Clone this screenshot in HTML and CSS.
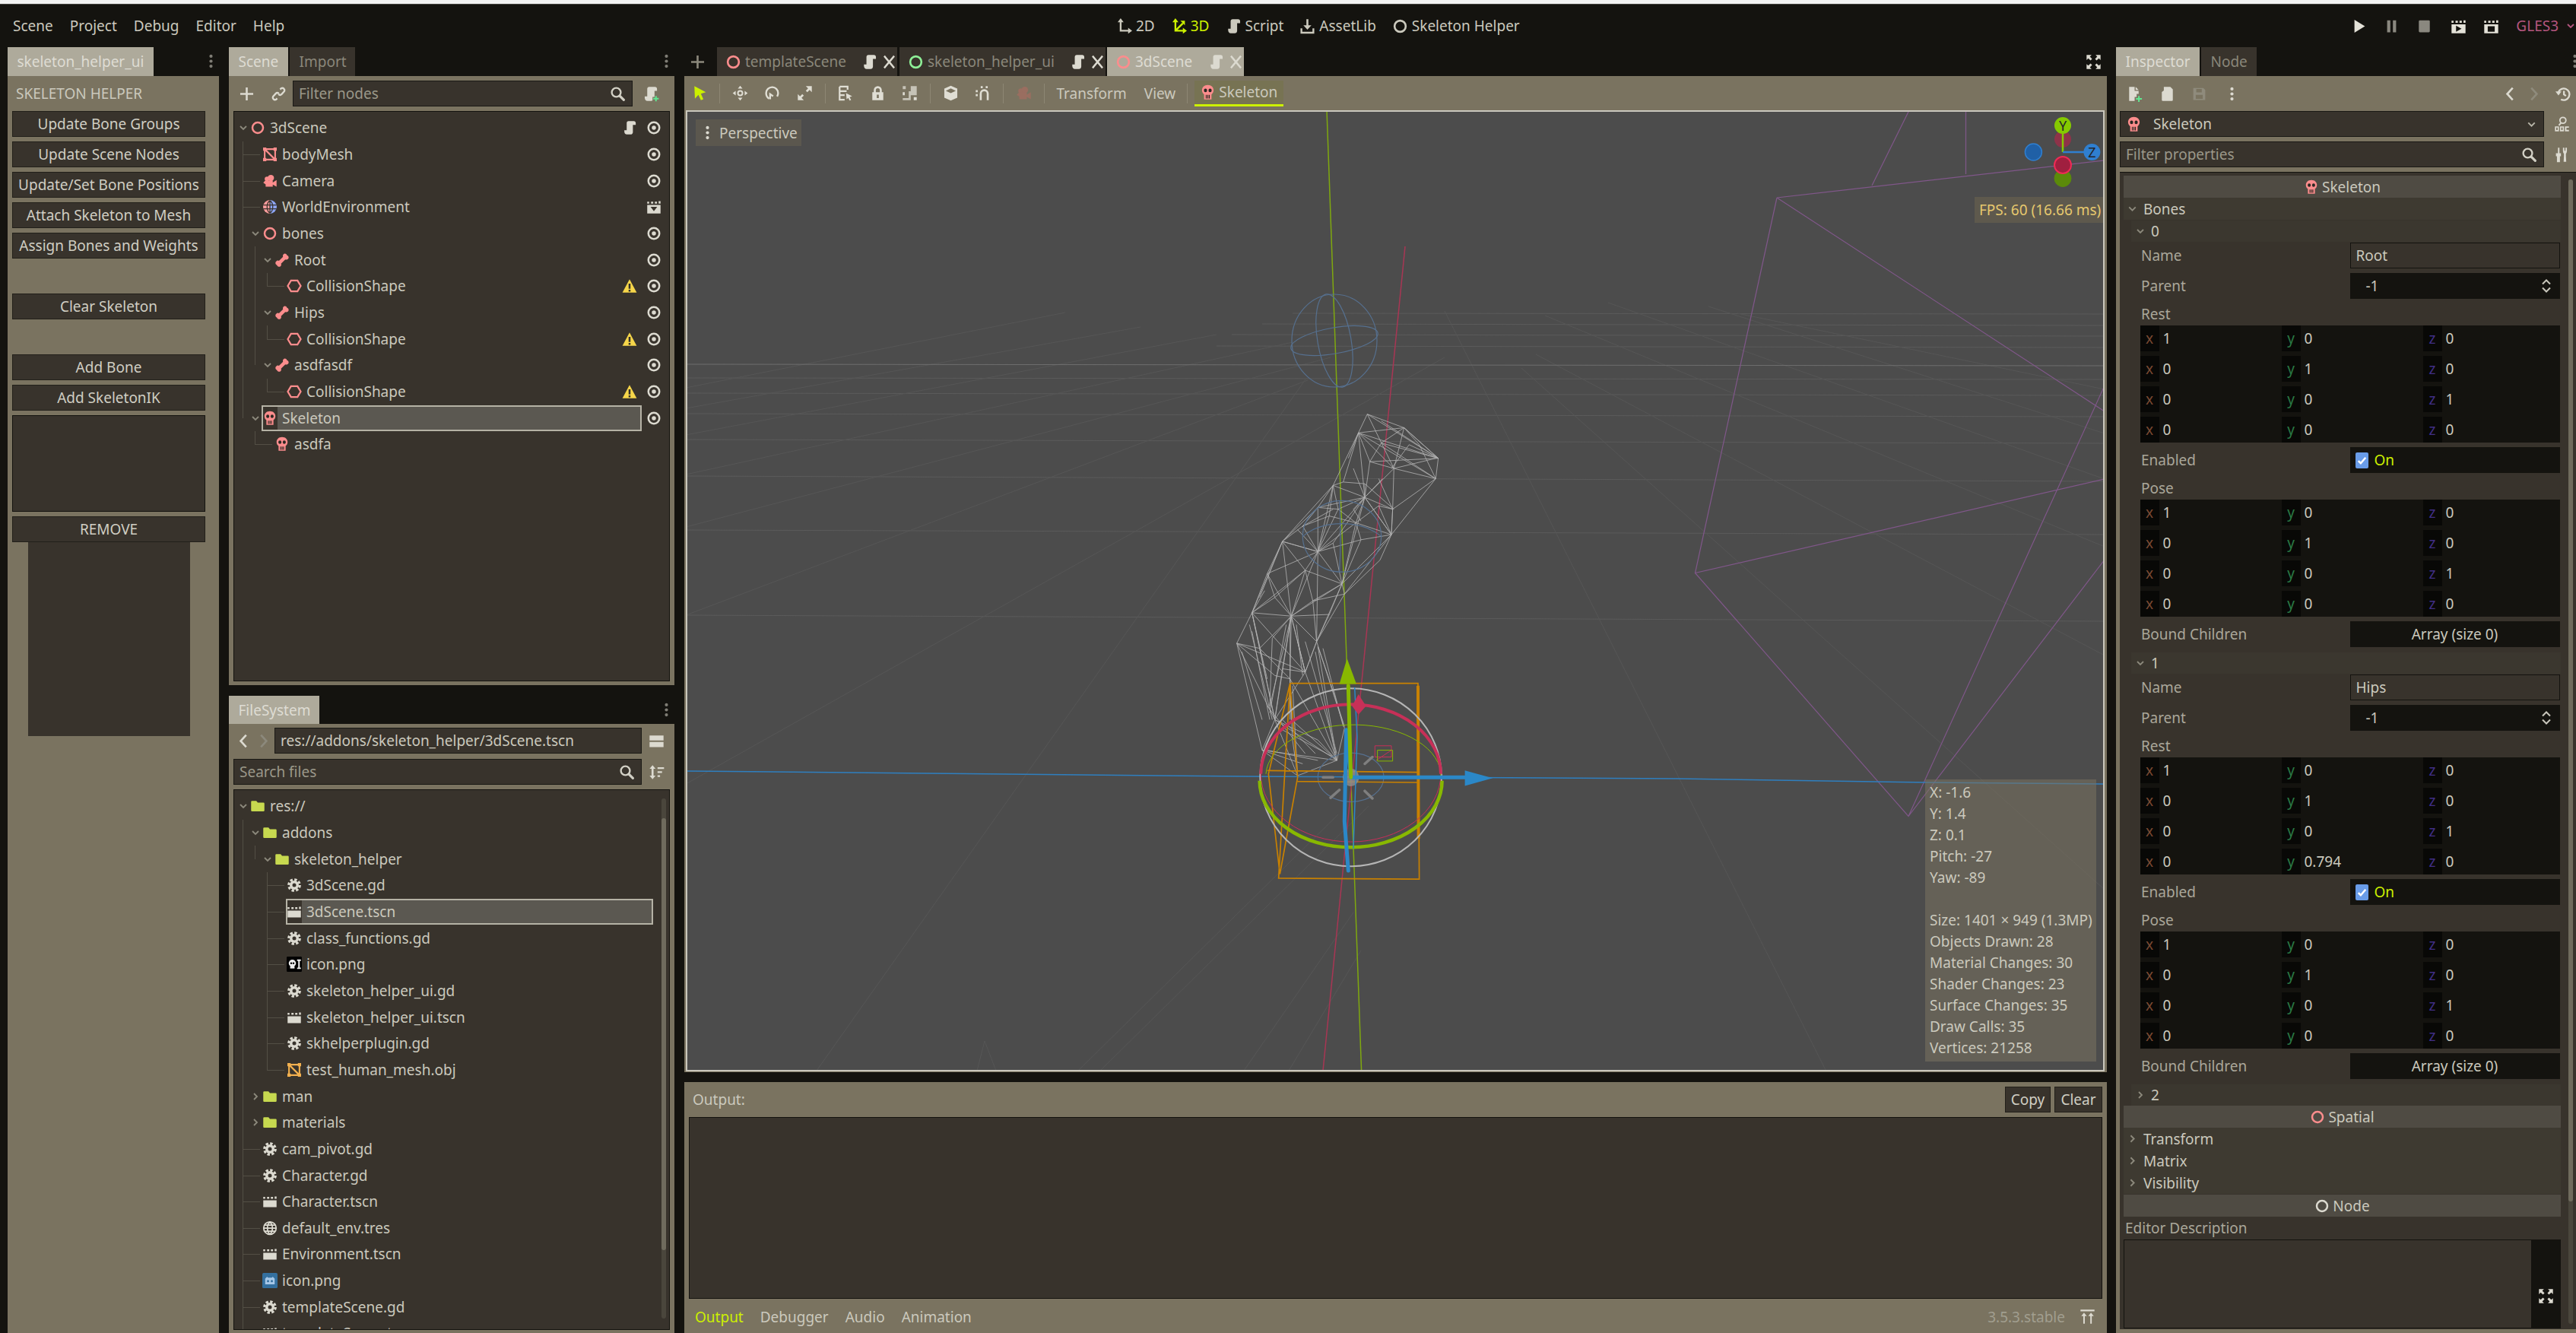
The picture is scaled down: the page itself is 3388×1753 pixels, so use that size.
FILE: index.html
```html
<!DOCTYPE html>
<html lang="en">
<head>
<meta charset="utf-8">
<title>Godot Engine - Skeleton Helper</title>
<link rel="stylesheet" href="styles.css">
</head>
<body>
<svg class="defs" width="0" height="0" aria-hidden="true">
<defs>
<symbol id="node" viewBox="0 0 16 16"><circle cx="8" cy="8" r="5.600" fill="none" stroke="currentColor" stroke-width="2"/></symbol>
<symbol id="eye" viewBox="0 0 16 16"><circle cx="8" cy="8" r="5.800" fill="none" stroke="currentColor" stroke-width="2"/><circle cx="8" cy="8" r="2.200" fill="currentColor"/></symbol>
<symbol id="script" viewBox="0 0 16 16"><path fill="currentColor" d="M7 1C5.700 1 5 2 5 3v7.500H2.500V12c0 1.800 1 3 2.700 3H9c1.500 0 2.500-1 2.500-2.500V5h3V3c0-1.200-.8-2-2-2z"/></symbol>
<symbol id="scriptadd" viewBox="0 0 16 16"><path fill="currentColor" d="M6 1C4.700 1 4 2 4 3v7.500H1.500V12c0 1.800 1 3 2.700 3H8c.6 0 1-.2 1.300-.5V11h2V5h2.500V3c0-1.200-.8-2-2-2z"/><path fill="#5fe890" d="M12 10h1.500v2H15.500v1.500h-2v2H12v-2h-2V12h2z"/></symbol>
<symbol id="warn" viewBox="0 0 16 16"><path fill="#f6d64a" d="M8 1l7.500 14H.5z"/><path fill="#33302a" d="M7 5.500h2V11H7zM7 12h2v2H7z"/></symbol>
<symbol id="mesh" viewBox="0 0 16 16"><path fill="none" stroke="currentColor" stroke-width="1.700" d="M2.500 2.500h11v11h-11zM2.500 2.500l11 11"/><path fill="currentColor" d="M.8.8h3.400v3.400H.8zM11.800.8h3.400v3.400h-3.400zM.8 11.800h3.400v3.400H.8zM11.800 11.800h3.400v3.400h-3.400z"/></symbol>
<symbol id="camera" viewBox="0 0 16 16"><circle cx="5" cy="5.800" r="2.500" fill="currentColor"/><circle cx="9" cy="4.800" r="3.300" fill="currentColor"/><path fill="currentColor" d="M1 9.800L3 7.500h8v2l4-2.500v7l-4-2.200v2.200H3.500V11.500z"/></symbol>
<symbol id="world" viewBox="0 0 16 16"><path fill="#fc9c9c" d="M8 .8a7.200 7.200 0 0 0 0 14.400z"/><path fill="#8da5f3" d="M8 .8a7.200 7.200 0 0 1 0 14.400z"/><path fill="none" stroke="#38332c" stroke-width="1" d="M1 6h14M1 10h14M8 1v14M8 1.500C4 4 4 12 8 14.500M8 1.500c4 2.500 4 10.500 0 13"/></symbol>
<symbol id="globe" viewBox="0 0 16 16"><g fill="none" stroke="currentColor" stroke-width="1.400"><circle cx="8" cy="8" r="6.600"/><path d="M1.500 8h13M8 1.500c-3.500 3-3.500 10 0 13M8 1.500c3.500 3 3.500 10 0 13M2.500 4.800h11M2.500 11.200h11"/></g></symbol>
<symbol id="bone" viewBox="0 0 16 16"><path fill="currentColor" d="M11.200 1.200a2.300 2.300 0 0 1 2 1.800 2.300 2.300 0 0 1 .9 4c-.8.700-1.800.7-2.700.3L6.900 11.700c.4.900.3 1.900-.4 2.600a2.300 2.300 0 0 1-3.900-1A2.300 2.300 0 0 1 2 9.200a2.300 2.300 0 0 1 2.700-.4L9 4.500c-.4-.9-.2-1.900.4-2.600.5-.5 1.100-.8 1.800-.7z"/></symbol>
<symbol id="col" viewBox="0 0 16 16"><path fill="none" stroke="currentColor" stroke-width="1.800" d="M1.200 8L4.600 2.300h6.800L14.800 8l-3.400 5.700H4.600z"/></symbol>
<symbol id="skull" viewBox="0 0 16 16"><path fill="currentColor" d="M8 .5c3.600 0 5.800 2.300 5.800 5.300 0 2-.9 3.400-2.100 4.200v5H4.300v-5C3.100 9.200 2.200 7.800 2.200 5.800 2.200 2.800 4.400.5 8 .5z"/><g fill="#2b2722"><ellipse cx="5.700" cy="6" rx="1.600" ry="1.800"/><ellipse cx="10.300" cy="6" rx="1.600" ry="1.800"/><path d="M6 10.500h.9v3.500H6zM7.600 10.500h.9v3.500h-.9zM9.100 10.500h.9v3.500h-.9z"/></g></symbol>
<symbol id="clap" viewBox="0 0 16 16"><path fill="currentColor" d="M1 6.800h14V14H1zM1 3.200l2 .0v1.900H1zM5 3.200h2.300v1.900H5zM9 3.200h2.300v1.900H9zM13 2.800h2v2.300h-2z"/></symbol>
<symbol id="gear" viewBox="0 0 16 16"><circle cx="8" cy="8" r="4.800" fill="currentColor"/><circle cx="8" cy="8" r="5.800" fill="none" stroke="currentColor" stroke-width="2.600" stroke-dasharray="2.700 1.850"/><circle cx="8" cy="8" r="2" fill="#38332c"/></symbol>
<symbol id="folder" viewBox="0 0 16 16"><path fill="currentColor" d="M1 3.500a1 1 0 0 1 1-1h4.500l1.500 1.800h6a1 1 0 0 1 1 1v7.200a1 1 0 0 1-1 1H2a1 1 0 0 1-1-1z"/></symbol>
<symbol id="search" viewBox="0 0 16 16"><circle cx="6.500" cy="6.500" r="4.500" fill="none" stroke="currentColor" stroke-width="1.800"/><path stroke="currentColor" stroke-width="2.400" stroke-linecap="round" d="M10 10l4 4"/></symbol>
<symbol id="plus" viewBox="0 0 16 16"><path fill="currentColor" d="M7 1.500h2V7h5.500v2H9v5.500H7V9H1.500V7H7z"/></symbol>
<symbol id="link" viewBox="0 0 16 16"><path fill="none" stroke="currentColor" stroke-width="1.800" d="M9.500 3.500l1.200-1.200a2.300 2.300 0 0 1 3 3L11 8.300a2.300 2.300 0 0 1-3.200 0M6.500 12.500l-1.200 1.200a2.300 2.300 0 0 1-3-3L5 7.700a2.300 2.300 0 0 1 3.200 0"/></symbol>
<symbol id="dots" viewBox="0 0 16 16"><circle cx="8" cy="3" r="1.600" fill="currentColor"/><circle cx="8" cy="8" r="1.600" fill="currentColor"/><circle cx="8" cy="13" r="1.600" fill="currentColor"/></symbol>
<symbol id="chev" viewBox="0 0 16 16"><path fill="none" stroke="currentColor" stroke-width="1.800" d="M4 6l4 4 4-4"/></symbol>
<symbol id="chevr" viewBox="0 0 16 16"><path fill="none" stroke="currentColor" stroke-width="1.800" d="M6 4l4 4-4 4"/></symbol>
<symbol id="back" viewBox="0 0 16 16"><path fill="none" stroke="currentColor" stroke-width="2" d="M10.500 2L5 8l5.500 6"/></symbol>
<symbol id="fwd" viewBox="0 0 16 16"><path fill="none" stroke="currentColor" stroke-width="2" d="M5.500 2L11 8l-5.500 6"/></symbol>
<symbol id="close" viewBox="0 0 16 16"><path fill="none" stroke="currentColor" stroke-width="1.800" d="M3 2l10 12M13 2L3 14"/></symbol>
<symbol id="full" viewBox="0 0 16 16"><path fill="currentColor" d="M1 1h5L4.300 2.700 6.500 5 5 6.500 2.700 4.300 1 6zM15 1v5l-1.700-1.700L11 6.500 9.500 5l2.200-2.300L10 1zM1 15v-5l1.700 1.700L5 9.500 6.500 11l-2.200 2.300L6 15zM15 15h-5l1.700-1.700L9.500 11 11 9.500l2.300 2.200L15 10z"/></symbol>
<symbol id="i2d" viewBox="0 0 16 16"><path fill="none" stroke="currentColor" stroke-width="1.800" d="M4.500 3.500v9h8"/><path fill="currentColor" d="M4.500 0l3 4h-6zM16 12.500l-4 3v-6z"/></symbol>
<symbol id="i3d" viewBox="0 0 16 16"><path fill="none" stroke="currentColor" stroke-width="1.800" d="M4.500 3.500v9h8M4.500 12.500L12 5"/><path fill="currentColor" d="M4.500 0l3 4h-6zM16 12.500l-4 3v-6zM14 2.500v4.500L9.500 2.500z"/></symbol>
<symbol id="asset" viewBox="0 0 16 16"><path fill="currentColor" d="M7 1h2v6h3l-4 4.500L4 7h3z"/><path fill="none" stroke="currentColor" stroke-width="1.800" d="M2 10v4.500h12V10"/></symbol>
<symbol id="play" viewBox="0 0 16 16"><path fill="currentColor" d="M3.500 1.500L14 8 3.500 14.500z"/></symbol>
<symbol id="pause" viewBox="0 0 16 16"><path fill="currentColor" d="M3.500 2h3.200v12H3.500zM9.300 2h3.200v12H9.300z"/></symbol>
<symbol id="stop" viewBox="0 0 16 16"><rect x="2.500" y="2" width="11" height="12" rx="1" fill="currentColor"/></symbol>
<symbol id="playscene" viewBox="0 0 16 16"><path fill="currentColor" d="M1 6h14v9H1zM1 2.500h2v2H1zM5 2.500h2.300v2H5zM9 2.500h2.300v2H9zM13 2h2v2.500h-2z"/><path fill="#14130f" d="M5.500 7.500L11 10.500l-5.500 3z"/></symbol>
<symbol id="envclap" viewBox="0 0 16 16"><path fill="currentColor" d="M1 6h14v9H1zM1 2.500h2v2H1zM5 2.500h2.300v2H5zM9 2.500h2.300v2H9zM13 2h2v2.500h-2z"/><path fill="#38332c" d="M4.500 8h7L8 12.500z"/></symbol>
<symbol id="playcustom" viewBox="0 0 16 16"><path fill="currentColor" d="M1 6h14v9H1zM1 2.500h2v2H1zM5 2.500h2.300v2H5zM9 2.500h2.300v2H9zM13 2h2v2.500h-2z"/><path fill="#14130f" d="M4.500 8h7v5.500h-7z"/></symbol>
<symbol id="fnew" viewBox="0 0 16 16"><path fill="currentColor" d="M2.500 1H8v4h4v3h-2v3H8v4H2.500z"/><path fill="currentColor" d="M9 1l3 3H9z"/><path fill="#5fe890" d="M11.500 10h1.500v2.200h2.300v1.500H13V16h-1.500v-2.300H9.300v-1.500h2.200z"/></symbol>
<symbol id="fopen" viewBox="0 0 16 16"><path fill="currentColor" d="M4.500 1H11l2.500 2.500V14a1 1 0 0 1-1 1H3.500a1 1 0 0 1-1-1V6l2-1.500z"/></symbol>
<symbol id="fsave" viewBox="0 0 16 16"><path fill="currentColor" d="M2 2h10l2 2v10H2zM5 3v3.500h5.500V3zM4.500 9v4h7V9z"/></symbol>
<symbol id="hist" viewBox="0 0 16 16"><path fill="none" stroke="currentColor" stroke-width="1.800" d="M2.800 6.500A5.800 5.800 0 1 1 5.500 13.500M8.500 5v3.500l2 1.500"/><path fill="currentColor" d="M0 5.500h6l-3 4z"/></symbol>
<symbol id="doc" viewBox="0 0 16 16"><circle cx="9" cy="4" r="3" fill="none" stroke="currentColor" stroke-width="1.400"/><path stroke="currentColor" stroke-width="1.600" d="M7 6.500L5 9"/><path fill="currentColor" d="M1 10h4v5H1zM6 10h4v5H6zM11 10h4v1.500h-2.500v2H15V15h-4z"/><path fill="#7a7360" d="M2.300 11.300h1.400v2.400H2.300zM7.300 11.300h1.400v2.400H7.300z"/></symbol>
<symbol id="tools" viewBox="0 0 16 16"><path fill="currentColor" d="M4 1h1.500v5.500H7v3H6v6H3v-6H2v-3h2zM9 1h1.500v3h1V1H13v3c0 1.500-.5 2.500-1 3v2.500L12.300 15h-2.600L10 9.500V7c-.5-.5-1-1.500-1-3z"/></symbol>
<symbol id="spin" viewBox="0 0 16 16"><path fill="none" stroke="currentColor" stroke-width="1.600" d="M4 6l4-4 4 4M4 10l4 4 4-4"/></symbol>
<symbol id="split" viewBox="0 0 16 16"><path fill="currentColor" d="M1 2.500h14v5H1zM1 9h14v5H1z"/></symbol>
<symbol id="sort" viewBox="0 0 16 16"><path fill="currentColor" d="M4 1l3 3.500H5v7h2L4 15l-3-3.500h2v-7H1zM9 3h6.500v1.800H9zM9 7h4.500v1.800H9zM9 11h2.500v1.800H9z"/></symbol>
<symbol id="top" viewBox="0 0 16 16"><path fill="currentColor" d="M1 1h14v1.600H1zM4.500 4l2.800 3.500H5.300V15H3.800V7.500H1.800zM11.500 4l2.800 3.500h-2V15h-1.500V7.500h-2z"/></symbol>
<symbol id="cursor" viewBox="0 0 16 16"><path fill="currentColor" d="M2.500 1L14 7l-5 1.500L11.500 14l-2.500 1L6.500 9.800 3 13.500z"/></symbol>
<symbol id="move" viewBox="0 0 16 16"><path fill="currentColor" d="M8 .5l2.300 3H5.700zM8 15.500l-2.300-3h4.600zM.5 8l3-2.300v4.600zM15.500 8l-3 2.300V5.700z"/><circle cx="8" cy="8" r="2.300" fill="none" stroke="currentColor" stroke-width="1.500"/></symbol>
<symbol id="rotate" viewBox="0 0 16 16"><path fill="none" stroke="currentColor" stroke-width="1.800" d="M5 13.500C3 12.300 2 10.300 2 8a6 6 0 1 1 12 0c0 1.200-.4 2.300-1 3.300"/><path fill="none" stroke="currentColor" stroke-width="1.800" d="M6 14V9L9 11"/></symbol>
<symbol id="scale" viewBox="0 0 16 16"><path fill="currentColor" d="M9 1h6v6l-2.200-2.200L10.500 7 9 5.500l2.300-2.200zM7 15H1V9l2.200 2.200L5.500 9 7 10.500l-2.300 2.300z"/></symbol>
<symbol id="listsel" viewBox="0 0 16 16"><path fill="none" stroke="currentColor" stroke-width="1.700" d="M2.500 1.500h8v3M2.500 1.500v13h5M2.500 6h7M2.500 10h5"/><path fill="currentColor" d="M9 8l6 3-2.500 1 1.500 2.800-1.500.7-1.300-2.800L9.500 14z"/></symbol>
<symbol id="lock" viewBox="0 0 16 16"><path fill="currentColor" d="M8 1a4 4 0 0 1 4 4v2h1.500v8h-11V7H4V5a4 4 0 0 1 4-4zm0 2a2 2 0 0 0-2 2v2h4V5a2 2 0 0 0-2-2zM7 9.500V13h2V9.500z"/></symbol>
<symbol id="group" viewBox="0 0 16 16"><path fill="currentColor" d="M1 1h3v3H1zM6 1h9v9H9v5H1v-2h6V6h2V1z" opacity=".75"/><path fill="currentColor" d="M12 12h3v3h-3zM1 7h2v3H1z"/></symbol>
<symbol id="local" viewBox="0 0 16 16"><path fill="currentColor" d="M8 .5l6.500 3v9L8 15.500l-6.500-3v-9zM8 8l5-2.300L8 3.300 3 5.700z"/></symbol>
<symbol id="snap" viewBox="0 0 16 16"><path fill="none" stroke="currentColor" stroke-width="2" d="M6 15V8.500a3.500 3.500 0 0 1 7 0V15"/><path fill="currentColor" d="M1 5h2v2H1zM1 9h2v2H1zM6 1h2v2H6zM11 1h2v2h-2z"/></symbol>
<symbol id="skicon" viewBox="0 0 16 16"><rect width="16" height="16" rx="1" fill="#000"/><circle cx="6" cy="7" r="3.800" fill="#eee"/><rect x="3.700" y="10" width="4.600" height="2.500" fill="#eee"/><circle cx="4.800" cy="7" r="1" fill="#000"/><circle cx="7.200" cy="7" r="1" fill="#000"/><path fill="#eee" d="M11 3h4v1.500h-1.200v7H15V13h-4v-1.500h1.200v-7H11z"/></symbol>
<symbol id="godot" viewBox="0 0 16 16"><rect width="16" height="16" rx="1.500" fill="#34709f"/><path fill="#a6c8e8" d="M3 6l2-2 1 1h4l1-1 2 2v6H3z"/><circle cx="6" cy="8.500" r="1.200" fill="#34709f"/><circle cx="10" cy="8.500" r="1.200" fill="#34709f"/></symbol>
</defs>
</svg>

<div class="editor">
<div class="strip"></div>
<header class="titlebar">
  <nav class="menu"><span>Scene</span><span>Project</span><span>Debug</span><span>Editor</span><span>Help</span></nav>
  <nav class="modes">
    <span class="mode"><svg class="ic"><use href="#i2d"/></svg>2D</span>
    <span class="mode on"><svg class="ic"><use href="#i3d"/></svg>3D</span>
    <span class="mode"><svg class="ic"><use href="#script"/></svg>Script</span>
    <span class="mode"><svg class="ic"><use href="#asset"/></svg>AssetLib</span>
    <span class="mode"><svg class="ic"><use href="#node"/></svg>Skeleton Helper</span>
  </nav>
  <div class="runbar">
    <svg class="ic run"><use href="#play"/></svg>
    <svg class="ic run dim"><use href="#pause"/></svg>
    <svg class="ic run dim"><use href="#stop"/></svg>
    <svg class="ic run sp"><use href="#playscene"/></svg>
    <svg class="ic run"><use href="#playcustom"/></svg>
    <span class="gles">GLES3</span>
    <svg class="ic chevg"><use href="#chev"/></svg>
  </div>
</header>

<main class="main">

<section class="dock leftdock">
  <div class="tabs"><span class="tab on t-ui">skeleton_helper_ui</span><svg class="ic dotsbtn"><use href="#dots"/></svg></div>
  <div class="panel helper">
    <div class="hlabel">SKELETON HELPER</div>
    <button class="btn">Update Bone Groups</button>
    <button class="btn">Update Scene Nodes</button>
    <button class="btn">Update/Set Bone Positions</button>
    <button class="btn">Attach Skeleton to Mesh</button>
    <button class="btn">Assign Bones and Weights</button>
    <div class="hspace"></div>
    <button class="btn">Clear Skeleton</button>
    <div class="hspace"></div>
    <button class="btn">Add Bone</button>
    <button class="btn">Add SkeletonIK</button>
    <div class="hbox"></div>
    <button class="btn">REMOVE</button>
    <div class="hblock"></div>
  </div>
</section>

<section class="dock midcol">
  <div class="tabs"><span class="tab on t-scene">Scene</span><span class="tab t-import">Import</span><svg class="ic dotsbtn"><use href="#dots"/></svg></div>
  <div class="panel scenepanel">
    <div class="sbar">
      <svg class="ic sbtn"><use href="#plus"/></svg>
      <svg class="ic sbtn link"><use href="#link"/></svg>
      <div class="field filter"><span class="ph">Filter nodes</span><svg class="ic sic"><use href="#search"/></svg></div>
      <svg class="ic sbtn sadd"><use href="#scriptadd"/></svg>
    </div>
    <div class="tree scenetree">
      <div class="row l0"><svg class="ar"><use href="#chev"/></svg><svg class="ic pink"><use href="#node"/></svg><span class="nm">3dScene</span><span class="tail"><svg class="ic w"><use href="#script"/></svg><svg class="ic w"><use href="#eye"/></svg></span></div>
      <div class="row l1"><i class="g g0"></i><i class="k k0"></i><span class="ar"></span><svg class="ic pink"><use href="#mesh"/></svg><span class="nm">bodyMesh</span><span class="tail"><svg class="ic w"><use href="#eye"/></svg></span></div>
      <div class="row l1"><i class="g g0"></i><i class="k k0"></i><span class="ar"></span><svg class="ic pink"><use href="#camera"/></svg><span class="nm">Camera</span><span class="tail"><svg class="ic w"><use href="#eye"/></svg></span></div>
      <div class="row l1"><i class="g g0"></i><i class="k k0"></i><span class="ar"></span><svg class="ic"><use href="#world"/></svg><span class="nm">WorldEnvironment</span><span class="tail"><svg class="ic w"><use href="#envclap"/></svg></span></div>
      <div class="row l1"><i class="g g0"></i><svg class="ar"><use href="#chev"/></svg><svg class="ic pink"><use href="#node"/></svg><span class="nm">bones</span><span class="tail"><svg class="ic w"><use href="#eye"/></svg></span></div>
      <div class="row l2"><i class="g g0"></i><i class="g g1"></i><svg class="ar"><use href="#chev"/></svg><svg class="ic pink"><use href="#bone"/></svg><span class="nm">Root</span><span class="tail"><svg class="ic w"><use href="#eye"/></svg></span></div>
      <div class="row l3"><i class="g g0"></i><i class="g g1"></i><i class="g g2 end"></i><i class="k k2"></i><span class="ar"></span><svg class="ic pink"><use href="#col"/></svg><span class="nm">CollisionShape</span><span class="tail"><svg class="ic"><use href="#warn"/></svg><svg class="ic w"><use href="#eye"/></svg></span></div>
      <div class="row l2"><i class="g g0"></i><i class="g g1"></i><svg class="ar"><use href="#chev"/></svg><svg class="ic pink"><use href="#bone"/></svg><span class="nm">Hips</span><span class="tail"><svg class="ic w"><use href="#eye"/></svg></span></div>
      <div class="row l3"><i class="g g0"></i><i class="g g1"></i><i class="g g2 end"></i><i class="k k2"></i><span class="ar"></span><svg class="ic pink"><use href="#col"/></svg><span class="nm">CollisionShape</span><span class="tail"><svg class="ic"><use href="#warn"/></svg><svg class="ic w"><use href="#eye"/></svg></span></div>
      <div class="row l2"><i class="g g0"></i><i class="g g1 end"></i><svg class="ar"><use href="#chev"/></svg><svg class="ic pink"><use href="#bone"/></svg><span class="nm">asdfasdf</span><span class="tail"><svg class="ic w"><use href="#eye"/></svg></span></div>
      <div class="row l3"><i class="g g0"></i><i class="g g2 end"></i><i class="k k2"></i><span class="ar"></span><svg class="ic pink"><use href="#col"/></svg><span class="nm">CollisionShape</span><span class="tail"><svg class="ic"><use href="#warn"/></svg><svg class="ic w"><use href="#eye"/></svg></span></div>
      <div class="row l1"><i class="g g0 end"></i><svg class="ar"><use href="#chev"/></svg><span class="selwrap wide1"><svg class="ic pink selic"><use href="#skull"/></svg><span class="nm">Skeleton</span></span><span class="tail"><svg class="ic w"><use href="#eye"/></svg></span></div>
      <div class="row l2"><i class="g g1 end"></i><i class="k k1"></i><span class="ar"></span><svg class="ic pink"><use href="#skull"/></svg><span class="nm">asdfa</span></div>
    </div>
  </div>
  <div class="tabs fstabs"><span class="tab on t-fs">FileSystem</span><svg class="ic dotsbtn"><use href="#dots"/></svg></div>
  <div class="panel fspanel">
    <div class="fsbar">
      <svg class="ic navb"><use href="#back"/></svg>
      <svg class="ic navb dim2"><use href="#fwd"/></svg>
      <div class="field path">res://addons/skeleton_helper/3dScene.tscn</div>
      <svg class="ic sbtn sadd"><use href="#split"/></svg>
    </div>
    <div class="fsbar fsbar2">
      <div class="field fsearch"><span class="ph">Search files</span><svg class="ic sic"><use href="#search"/></svg></div>
      <svg class="ic sbtn sadd"><use href="#sort"/></svg>
    </div>
    <div class="tree fstree">
      <div class="row l0"><svg class="ar"><use href="#chev"/></svg><svg class="ic yg"><use href="#folder"/></svg><span class="nm">res://</span></div>
      <div class="row l1"><i class="g g0"></i><svg class="ar"><use href="#chev"/></svg><svg class="ic yg"><use href="#folder"/></svg><span class="nm">addons</span></div>
      <div class="row l2"><i class="g g0"></i><i class="g g1 end"></i><svg class="ar"><use href="#chev"/></svg><svg class="ic yg"><use href="#folder"/></svg><span class="nm">skeleton_helper</span></div>
      <div class="row l3"><i class="g g0"></i><i class="g g2"></i><i class="k k2"></i><span class="ar"></span><svg class="ic w"><use href="#gear"/></svg><span class="nm">3dScene.gd</span></div>
      <div class="row l3"><i class="g g0"></i><i class="g g2"></i><i class="k k2"></i><span class="ar"></span><span class="selwrap wide3"><svg class="ic w selic"><use href="#clap"/></svg><span class="nm">3dScene.tscn</span></span></div>
      <div class="row l3"><i class="g g0"></i><i class="g g2"></i><i class="k k2"></i><span class="ar"></span><svg class="ic w"><use href="#gear"/></svg><span class="nm">class_functions.gd</span></div>
      <div class="row l3"><i class="g g0"></i><i class="g g2"></i><i class="k k2"></i><span class="ar"></span><svg class="ic"><use href="#skicon"/></svg><span class="nm">icon.png</span></div>
      <div class="row l3"><i class="g g0"></i><i class="g g2"></i><i class="k k2"></i><span class="ar"></span><svg class="ic w"><use href="#gear"/></svg><span class="nm">skeleton_helper_ui.gd</span></div>
      <div class="row l3"><i class="g g0"></i><i class="g g2"></i><i class="k k2"></i><span class="ar"></span><svg class="ic w"><use href="#clap"/></svg><span class="nm">skeleton_helper_ui.tscn</span></div>
      <div class="row l3"><i class="g g0"></i><i class="g g2"></i><i class="k k2"></i><span class="ar"></span><svg class="ic w"><use href="#gear"/></svg><span class="nm">skhelperplugin.gd</span></div>
      <div class="row l3"><i class="g g0"></i><i class="g g2 end"></i><i class="k k2"></i><span class="ar"></span><svg class="ic orange"><use href="#mesh"/></svg><span class="nm">test_human_mesh.obj</span></div>
      <div class="row l1"><i class="g g0"></i><svg class="ar"><use href="#chevr"/></svg><svg class="ic yg"><use href="#folder"/></svg><span class="nm">man</span></div>
      <div class="row l1"><i class="g g0"></i><svg class="ar"><use href="#chevr"/></svg><svg class="ic yg"><use href="#folder"/></svg><span class="nm">materials</span></div>
      <div class="row l1"><i class="g g0"></i><i class="k k0"></i><span class="ar"></span><svg class="ic w"><use href="#gear"/></svg><span class="nm">cam_pivot.gd</span></div>
      <div class="row l1"><i class="g g0"></i><i class="k k0"></i><span class="ar"></span><svg class="ic w"><use href="#gear"/></svg><span class="nm">Character.gd</span></div>
      <div class="row l1"><i class="g g0"></i><i class="k k0"></i><span class="ar"></span><svg class="ic w"><use href="#clap"/></svg><span class="nm">Character.tscn</span></div>
      <div class="row l1"><i class="g g0"></i><i class="k k0"></i><span class="ar"></span><svg class="ic w"><use href="#globe"/></svg><span class="nm">default_env.tres</span></div>
      <div class="row l1"><i class="g g0"></i><i class="k k0"></i><span class="ar"></span><svg class="ic w"><use href="#clap"/></svg><span class="nm">Environment.tscn</span></div>
      <div class="row l1"><i class="g g0"></i><i class="k k0"></i><span class="ar"></span><svg class="ic"><use href="#godot"/></svg><span class="nm">icon.png</span></div>
      <div class="row l1"><i class="g g0"></i><i class="k k0"></i><span class="ar"></span><svg class="ic w"><use href="#gear"/></svg><span class="nm">templateScene.gd</span></div>
      <div class="row l1"><i class="g g0"></i><i class="k k0"></i><span class="ar"></span><svg class="ic w"><use href="#clap"/></svg><span class="nm">templateScene.tscn</span></div>
      <div class="scroll fsscroll"><div class="thumb"></div></div>
    </div>
  </div>
</section>

<section class="center">
  <div class="tabs ctabs">
    <svg class="ic ctplus"><use href="#plus"/></svg>
    <span class="ctab t1"><svg class="ic pink"><use href="#node"/></svg><span class="ctname">templateScene</span><svg class="ic w"><use href="#script"/></svg><svg class="ic w clos"><use href="#close"/></svg></span>
    <span class="ctab t2"><svg class="ic green"><use href="#node"/></svg><span class="ctname">skeleton_helper_ui</span><svg class="ic w"><use href="#script"/></svg><svg class="ic w clos"><use href="#close"/></svg></span>
    <span class="ctab on t3"><svg class="ic pink"><use href="#node"/></svg><span class="ctname">3dScene</span><svg class="ic w"><use href="#script"/></svg><svg class="ic w clos"><use href="#close"/></svg></span>
    <svg class="ic fullbtn"><use href="#full"/></svg>
  </div>
  <div class="panel viewpanel">
    <div class="vtools">
      <svg class="ic tb tb-sel"><use href="#cursor"/></svg>
      <i class="tsep first"></i>
      <svg class="ic tb"><use href="#move"/></svg>
      <svg class="ic tb"><use href="#rotate"/></svg>
      <svg class="ic tb"><use href="#scale"/></svg>
      <i class="tsep"></i>
      <svg class="ic tb"><use href="#listsel"/></svg>
      <svg class="ic tb"><use href="#lock"/></svg>
      <svg class="ic tb"><use href="#group"/></svg>
      <i class="tsep"></i>
      <svg class="ic tb"><use href="#local"/></svg>
      <svg class="ic tb"><use href="#snap"/></svg>
      <i class="tsep"></i>
      <svg class="ic tb camdim"><use href="#camera"/></svg>
      <i class="tsep"></i>
      <span class="tmenu">Transform</span><span class="tmenu">View</span>
      <i class="tsep last"></i>
      <span class="skelbtn"><svg class="ic pink"><use href="#skull"/></svg>Skeleton</span>
    </div>
    <div class="viewport">
      <svg class="scene" viewBox="902 145 1866 1263" preserveAspectRatio="none">
        <g class="grid">
          <path class="hz" d="M902 497L2768 499M902 517L2768 520M902 544L2768 548M902 578L2768 583M902 626L2768 633M902 697L2768 703M902 809L2768 817M1700 412L2768 413M1660 426L2768 428M1620 440L2768 442M1600 455L2768 457"/>
          <path d="M902 510L1401 411M902 537L1500 430M902 572L1600 440M902 624L1700 450M902 693L1750 470M902 809L1720 500M902 1031L1900 470M1074 1408L1717 499M1418 1408L1760 1071M1447 1408L1800 1060M1636 1408L1780 1200M1695 1408L1790 1250M1285 1408L1295 1369L1310 1408"/>
          <path d="M1900 409L2401 1407M2247 403L2768 570M2285 412L2768 512M2115 398L2768 630M2032 415L2768 719M2020 466L2768 862M2001 484L2768 1170"/>
          <path class="bright" d="M902 479L2768 481"/>
        </g>
        <path class="purple" d="M2337 260L2768 211M2337 260L2768 541M2337 260L2229.500 753.500L2768 630M2229.500 753.500L2510 1073.500L2768 507M2510 1073.500L2768 736M2585.500 145V229M2511 145L2462 244"/>
        <path class="axisg" d="M1745 145L1790.600 1408"/>
        <path class="axisr" d="M1848 324L1740 1408"/>
        <path class="axisb" d="M902 1014L1640 1021L2206 1024L2500 1028.600L2768 1031"/>
        <g class="sphere">
          <ellipse cx="1755" cy="448" rx="56" ry="61"/>
          <ellipse cx="1755" cy="448" rx="58" ry="17" transform="rotate(-10 1755 448)"/>
          <ellipse cx="1755" cy="448" rx="22" ry="62" transform="rotate(-10 1755 448)"/>
        </g>
        <g transform="translate(1500 500) scale(.3333 .4464)">
          <path class="wire" d="M895 100L1040 140L1175 230L1165 290L860 155L895 100L1175 230M860 155L1040 140L1175 230M860 155L1175 230M895 100L1000 260L1165 290M950 120L1175 230M1040 140L1000 260M950 185L1165 290M860 155L885 345L760 310L860 155M860 155L1000 260L995 380L885 345L1000 260M885 345L955 290M1165 290L995 380L990 455L1165 290M995 380L990 455M760 310L560 475L700 505L885 345M760 310L700 505M700 505L795 600L885 345M795 600L990 455L885 345M885 345L990 455M700 375L560 475M700 375L885 345M700 375L700 505M700 375L760 310M850 420L990 455M850 420L795 600M850 420L700 505M850 420L885 345M560 475L440 685L595 695L700 505L560 475M560 475L595 695M700 505L695 770M595 695L795 600L695 770L595 695M795 600L805 630L695 770M805 630L990 455M990 455L945 530L805 630M700 505L500 570L440 685M500 570L595 695M650 560L560 475M650 560L700 505M650 560L440 685M650 560L795 600M650 560L595 695M440 685L380 775L480 1090L530 1000L380 775M440 685L530 1000M440 685L650 860L595 695L530 1000M595 695L510 960M595 695L590 880M595 695L650 860L695 770L805 1025M695 770L650 860L775 1120L805 1025M650 860L530 1000L620 1165L775 1120L480 1090L620 1165M530 1000L775 1120M590 880L775 1120M380 775L530 870L590 880M380 775L650 860M440 685L500 880M700 785L775 1120M720 790L800 1020M500 1090L700 1120M560 1030L760 1110M600 1060L620 1165"/>
          <path class="wire" d="M760 310L800 300L885 305L885 345M800 300L860 155M905 240L885 345M905 240L1000 260M905 240L1175 230M840 260L885 345M1000 260L1165 230M885 345L840 380L870 415M885 305L1000 380M760 310L780 380L700 505M780 380L885 345M780 380L850 420M850 420L870 470L795 600M870 470L990 455M870 470L700 505M700 505L760 480L885 345M760 480L795 600M760 380L640 430L560 475M640 430L700 505M640 430L700 375M700 375L780 380M620 440L700 505M500 570L560 475M500 570L530 640L595 695M530 640L440 685M530 640L650 560M650 560L680 650L595 695M680 650L795 600M680 650L695 770M680 650L805 630M745 690L795 600M745 690L695 770M745 690L595 695M490 620L440 685M470 640L560 475M440 685L470 790L530 1000M470 790L595 695M470 790L380 775M470 790L590 880M520 760L595 695L560 850L650 860M520 760L510 960M560 850L530 1000M440 740L510 1000M400 800L480 1000M620 770L650 860M650 770L700 900L775 1100M700 785L740 870L805 1020M690 800L770 1110M530 1000L700 1060L775 1120M480 1090L640 1130M600 900L620 1165M590 880L595 1000L775 1120M590 880L600 1060M500 960L650 1100M560 1000L690 1100M590 700L590 1000M615 720L640 870M575 720L510 980M430 720L520 1000M990 260L1060 190L1175 230M1040 140L1100 190L1165 290M905 240L950 185L1040 140M950 185L1175 230M820 230L860 155L905 240M940 370L995 380L940 290M940 370L850 420M940 370L990 455M760 310L745 400L700 505M745 400L850 420M745 400L640 430"/>
          <ellipse class="sph2" cx="795" cy="460" rx="155" ry="105"/>
          <path class="sph2" d="M640 460C720 410 870 410 950 460M785 355C790 420 790 500 785 565"/>
          <ellipse class="sph2" cx="830" cy="1170" rx="130" ry="72"/>
          <path class="or" d="M590 893H1095L1100 1470L545 1467L590 893M590 893L620 1170L550 1455M590 893L505 1160L550 1455M500 1150L1100 1155M620 1182L1100 1185"/>
          <path class="orth" d="M1095 900L1097 1350"/>
          <ellipse class="ghost" cx="830" cy="1170" rx="358" ry="262"/>
          <path class="ticks" d="M720 1170H760M885 1130L915 1110M885 1210L915 1232M750 1230L785 1207"/>
          <ellipse class="hub" cx="830" cy="1170" rx="32" ry="26"/>
          <path class="redthin" d="M475 1160A355 200 0 0 0 1185 1160"/>
          <path class="greenthin" d="M495 1160A345 150 0 0 1 1185 1170"/>
          <path class="greenthick" d="M470 1180A358 195 0 0 0 1190 1180"/>
          <path class="redthick" d="M475 1160A355 205 0 0 1 1185 1160"/>
          <path class="blthin" d="M845 905L855 1050L840 1380"/>
          <path class="blthick" d="M830 1165L812 1030L805 1300L820 1445"/>
          <path class="blthick" d="M830 1170H1280"/>
          <path class="grthick" d="M820 900L830 1170"/>
          <path class="ftip-g" d="M815 820L852 895H785Z"/>
          <path class="ftip-b" d="M1280 1150L1390 1172L1280 1195Z"/>
          <path class="ftip-r" d="M835 960L860 925L890 960L860 985Z"/>
          <path class="redthin" d="M925 1077H990V1110H925ZM930 1120L990 1090"/>
          <path class="greenthin" d="M935 1090H995V1122H935Z"/>
        </g>
        <g class="giz">
          <circle class="gz-rd" cx="2713" cy="183" r="11"/>
          <circle class="gz-gd" cx="2713" cy="234.500" r="11"/>
          <circle class="gz-bd" cx="2674.400" cy="200" r="11"/>
          <path class="gz-yl" d="M2713 165V200"/>
          <path class="gz-zl" d="M2713 200H2751"/>
          <circle class="gz-r" cx="2713" cy="217" r="11"/>
          <circle class="gz-y" cx="2713" cy="165" r="11"/>
          <circle class="gz-z" cx="2751.400" cy="200" r="11"/>
          <text class="gz-t" x="2713" y="171.500">Y</text>
          <text class="gz-t" x="2751.400" y="206.500">Z</text>
        </g>
      </svg>
      <div class="persp"><svg class="ic w"><use href="#dots"/></svg>Perspective</div>
      <div class="fps">FPS: 60 (16.66 ms)</div>
      <div class="stats">
        <div>X: -1.6</div><div>Y: 1.4</div><div>Z: 0.1</div><div>Pitch: -27</div><div>Yaw: -89</div><div>&nbsp;</div>
        <div>Size: 1401 × 949 (1.3MP)</div><div>Objects Drawn: 28</div><div>Material Changes: 30</div><div>Shader Changes: 23</div><div>Surface Changes: 35</div><div>Draw Calls: 35</div><div>Vertices: 21258</div>
      </div>
    </div>
  </div>
  <div class="panel output">
    <div class="ohead"><span class="olabel">Output:</span><button class="btn small">Copy</button><button class="btn small">Clear</button></div>
    <div class="obox"></div>
    <div class="ofoot"><span class="otab on">Output</span><span class="otab">Debugger</span><span class="otab">Audio</span><span class="otab">Animation</span><span class="ver">3.5.3.stable</span><svg class="ic w topic"><use href="#top"/></svg></div>
  </div>
</section>

<section class="dock inspector">
  <div class="tabs"><span class="tab on t-insp">Inspector</span><span class="tab t-node">Node</span><svg class="ic dotsbtn last"><use href="#dots"/></svg></div>
  <div class="panel inpanel">
    <div class="ibar">
      <svg class="ic w ibtn"><use href="#fnew"/></svg>
      <svg class="ic w ibtn"><use href="#fopen"/></svg>
      <svg class="ic ibtn greyic"><use href="#fsave"/></svg>
      <svg class="ic w ibtn"><use href="#dots"/></svg>
      <svg class="ic w ibtn2 pushright"><use href="#back"/></svg>
      <svg class="ic ibtn2 greyic"><use href="#fwd"/></svg>
      <svg class="ic w ibtn3"><use href="#hist"/></svg>
    </div>
    <div class="irow">
      <div class="field res"><svg class="ic pink"><use href="#skull"/></svg><span class="resname">Skeleton</span><svg class="ic chevsm"><use href="#chev"/></svg></div>
      <svg class="ic w irowbtn"><use href="#doc"/></svg>
    </div>
    <div class="irow">
      <div class="field res"><span class="ph">Filter properties</span><svg class="ic sic"><use href="#search"/></svg></div>
      <svg class="ic w irowbtn"><use href="#tools"/></svg>
    </div>
    <div class="props">
      <div class="chead"><svg class="ic pink"><use href="#skull"/></svg>Skeleton</div>
      <div class="sect"><svg class="ar"><use href="#chev"/></svg>Bones</div>
      <div class="idx"><svg class="ar"><use href="#chev"/></svg>0</div>
      <div class="prop first"><span class="plabel">Name</span><div class="pval input">Root</div></div>
      <div class="prop"><span class="plabel">Parent</span><div class="pval num">-1<svg class="ic spinic"><use href="#spin"/></svg></div></div>
      <div class="plab">Rest</div>
      <div class="mat">
        <i class="x">x</i><b>1</b><i class="y">y</i><b>0</b><i class="z">z</i><b>0</b>
        <i class="x">x</i><b>0</b><i class="y">y</i><b>1</b><i class="z">z</i><b>0</b>
        <i class="x">x</i><b>0</b><i class="y">y</i><b>0</b><i class="z">z</i><b>1</b>
        <i class="x">x</i><b>0</b><i class="y">y</i><b>0</b><i class="z">z</i><b>0</b>
      </div>
      <div class="prop"><span class="plabel">Enabled</span><div class="pval check"><span class="box"><svg viewBox="0 0 16 16"><path fill="none" stroke="#fff" stroke-width="2.400" d="M3.500 8.500l3 3 6-7"/></svg></span><span class="ontxt">On</span></div></div>
      <div class="plab">Pose</div>
      <div class="mat">
        <i class="x">x</i><b>1</b><i class="y">y</i><b>0</b><i class="z">z</i><b>0</b>
        <i class="x">x</i><b>0</b><i class="y">y</i><b>1</b><i class="z">z</i><b>0</b>
        <i class="x">x</i><b>0</b><i class="y">y</i><b>0</b><i class="z">z</i><b>1</b>
        <i class="x">x</i><b>0</b><i class="y">y</i><b>0</b><i class="z">z</i><b>0</b>
      </div>
      <div class="prop"><span class="plabel">Bound Children</span><div class="pval arr">Array (size 0)</div></div>
      <div class="idx gap"><svg class="ar"><use href="#chev"/></svg>1</div>
      <div class="prop first"><span class="plabel">Name</span><div class="pval input">Hips</div></div>
      <div class="prop"><span class="plabel">Parent</span><div class="pval num">-1<svg class="ic spinic"><use href="#spin"/></svg></div></div>
      <div class="plab">Rest</div>
      <div class="mat">
        <i class="x">x</i><b>1</b><i class="y">y</i><b>0</b><i class="z">z</i><b>0</b>
        <i class="x">x</i><b>0</b><i class="y">y</i><b>1</b><i class="z">z</i><b>0</b>
        <i class="x">x</i><b>0</b><i class="y">y</i><b>0</b><i class="z">z</i><b>1</b>
        <i class="x">x</i><b>0</b><i class="y">y</i><b>0.794</b><i class="z">z</i><b>0</b>
      </div>
      <div class="prop"><span class="plabel">Enabled</span><div class="pval check"><span class="box"><svg viewBox="0 0 16 16"><path fill="none" stroke="#fff" stroke-width="2.400" d="M3.500 8.500l3 3 6-7"/></svg></span><span class="ontxt">On</span></div></div>
      <div class="plab">Pose</div>
      <div class="mat">
        <i class="x">x</i><b>1</b><i class="y">y</i><b>0</b><i class="z">z</i><b>0</b>
        <i class="x">x</i><b>0</b><i class="y">y</i><b>1</b><i class="z">z</i><b>0</b>
        <i class="x">x</i><b>0</b><i class="y">y</i><b>0</b><i class="z">z</i><b>1</b>
        <i class="x">x</i><b>0</b><i class="y">y</i><b>0</b><i class="z">z</i><b>0</b>
      </div>
      <div class="prop"><span class="plabel">Bound Children</span><div class="pval arr">Array (size 0)</div></div>
      <div class="idx gap"><svg class="ar"><use href="#chevr"/></svg>2</div>
      <div class="chead"><svg class="ic pink"><use href="#node"/></svg>Spatial</div>
      <div class="sect closed"><svg class="ar"><use href="#chevr"/></svg>Transform</div>
      <div class="sect closed"><svg class="ar"><use href="#chevr"/></svg>Matrix</div>
      <div class="sect closed"><svg class="ar"><use href="#chevr"/></svg>Visibility</div>
      <div class="chead nodehead"><svg class="ic w"><use href="#node"/></svg>Node</div>
      <div class="edlabel">Editor Description</div>
      <div class="edbox"><div class="edside"><svg class="ic w"><use href="#full"/></svg></div></div>
      <div class="scroll inscroll"><div class="thumb"></div></div>
    </div>
  </div>
</section>

</main>
</div>
</body>
</html>
```

FILE: styles.css
```css
* { box-sizing: border-box; }
html, body { margin: 0; padding: 0; }
body {
  width: 3388px; height: 1753px; overflow: hidden;
  background: #14130f; color: #cbc9bd;
  font-family: "Noto Sans", "Open Sans", sans-serif; font-size: 19px;
}
.defs { position: absolute; }
.editor { width: 3388px; height: 1753px; display: flex; flex-direction: column; }
.strip { height: 6px; background: #f2f2f2; border-bottom: 1px solid #45443f; flex: none; }

.ic { width: 21px; height: 21px; flex: none; display: block; }
.w { color: #dcdad0; }
.pink { color: #fc8d8d; }
.green { color: #8eef97; }
.yg { color: #c7d94f; }
.orange { color: #f2b04f; }

/* title bar */
.titlebar { height: 56px; flex: none; display: flex; align-items: center; padding-left: 17px; }
.menu { width: 1451px; flex: none; display: flex; gap: 22px; }
.modes { display: flex; gap: 21px; }
.mode { display: flex; align-items: center; gap: 5px; }
.mode.on { color: #ccf000; }
.runbar { margin-left: auto; display: flex; align-items: center; }
.run { width: 21px; margin: 0 11px; color: #e4e2d8; }
.run.dim { color: #8a887f; }
.run.sp { margin-left: 13px; }
.gles { color: #b5567f; margin-left: 11px; }
.chevg { color: #b5567f; width: 16px; height: 16px; margin-left: 8px; margin-right: -1px; }

/* layout */
.main { flex: 1; min-height: 0; display: flex; padding-left: 10px; }
.dock { display: flex; flex-direction: column; flex: none; }
.leftdock { width: 278px; }
.midcol { width: 586px; margin-left: 13px; }
.center { width: 1871px; margin-left: 13px; flex: none; display: flex; flex-direction: column; }
.inspector { width: 605px; margin-left: 12px; }
.tabs { height: 38px; flex: none; display: flex; align-items: stretch; position: relative; }
.tab { display: flex; align-items: center; padding-left: 12.500px; color: #8a877a; background: #38332c; margin-right: 2px; }
.tab.on { background: #aeaa9b; color: #dedcd3; }
.t-ui { width: 192px; }
.t-scene { width: 78px; }
.t-import { width: 86px; }
.t-fs { width: 119px; }
.t-insp { width: 110px; }
.t-node { width: 73px; }
.dotsbtn { color: #7f7d75; margin: 8px 0 0 auto; }
.dotsbtn.last { margin-right: -9px; }
.panel { background: #7a7360; }

/* helper dock */
.helper { flex: 1; display: flex; flex-direction: column; gap: 6px; padding: 6px 18px 0 6px; }
.hlabel { height: 34px; line-height: 34px; padding-left: 5px; }
.btn {
  height: 34px; flex: none; font: inherit; color: #d0cec3; padding: 0;
  background: #38332c; border: 1px solid #22201a; display: flex; align-items: center; justify-content: center;
}
.hspace { height: 34px; flex: none; }
.hbox { height: 127px; flex: none; background: #38332c; border: 1px solid #14130f; }
.hblock { height: 255px; flex: none; width: 213px; margin: -6px 0 0 21px; background: #38332c; }

/* scene dock */
.scenepanel { height: 801px; flex: none; padding: 6px; }
.sbar { height: 34px; display: flex; align-items: center; }
.sbtn { color: #dcdad0; }
.sbar > .sbtn:first-child { margin-left: 7px; }
.link { margin-left: 21px; }
.filter { margin-left: 8px; width: 447px; }
.field {
  height: 34px; flex: none; background: #38332c; border: 1px solid #1a1915;
  display: flex; align-items: center; padding-left: 7px; color: #cbc9bd;
}
.ph { color: #9b9889; }
.sic { margin-left: auto; margin-right: 8px; color: #d2d0c5; }
.tree { position: relative; background: #38332c; border: 1px solid #14130f; overflow: hidden; }
.scenetree { height: 750px; margin-top: 6px; padding-top: 4px; }
.row { height: 34.670px; display: flex; align-items: center; padding-left: 4px; position: relative; white-space: nowrap; }
.l1 { padding-left: 20px; }
.l2 { padding-left: 36px; }
.l3 { padding-left: 52px; }
.ar { width: 16px; height: 16px; flex: none; color: #8c897c; }
.row .ic { margin-left: 1px; width: 20px; height: 20px; }
.nm { margin-left: 6px; }
.tail { margin-left: auto; padding-right: 10px; display: flex; gap: 12px; }
.tail .ic { margin-left: 0; }
.g { position: absolute; width: 1px; top: 0; bottom: 0; background: #534f45; }
.g.end { bottom: 50%; }
.g0 { left: 11px; }
.g1 { left: 27px; }
.g2 { left: 43px; }
.k { position: absolute; height: 1px; top: 50%; width: 23px; background: #534f45; }
.k0 { left: 11px; }
.k1 { left: 27px; }
.k2 { left: 43px; }
.selwrap {
  display: flex; align-items: center; height: 34px; background: #5b5851;
  outline: 2px solid #b5b2a5; outline-offset: -2px; position: relative;
}
.wide1 { width: 500px; }
.wide3 { width: 483px; }
.selic { background: #38332c; }
.row .selic { margin-left: 1px; padding: 0; height: 30px; }

/* filesystem dock */
.fstabs { margin-top: 14px; height: 37px; }
.fspanel { height: 802px; flex: none; padding: 5px 6px 0; overflow: hidden; }
.fsbar { height: 34px; display: flex; align-items: center; }
.fsbar2 { margin-top: 7px; }
.navb { color: #dcdad0; margin-left: 3px; }
.navb + .navb { margin-left: 5px; }
.dim2 { color: #8c897c; }
.path { margin-left: 4px; width: 483px; }
.fsearch { width: 537px; }
.sadd { margin-left: 9px; }
.sbar .sadd { margin-left: 14px; }
.fstree { height: 711px; margin-top: 6px; padding-top: 4px; }
.scroll { position: absolute; width: 6px; background: #4a463c; border-radius: 3px; }
.thumb { position: absolute; left: 0; right: 0; background: #6f6b5d; border-radius: 3px; }
.fsscroll { right: 4px; top: 11px; height: 684px; }
.fsscroll .thumb { top: 26px; height: 568px; }

/* center */
.ctabs { padding-left: 0; }
.ctplus { color: #8c897c; margin: 9px 0 0 7px; }
.ctab { display: flex; align-items: center; background: #38332c; color: #8a877a; position: relative; }
.ctab .ctname { margin-left: 5px; }
.ctab .clos { margin-left: 5px; }
.ctab.on { background: #aeaa9b; color: #dedcd3; }
.t1 { width: 237px; margin-left: 15px; padding-left: 11px; }
.t2 { width: 271px; margin-left: 3px; padding-left: 11px; }
.t3 { width: 180px; margin-left: 2px; padding-left: 11px; }
.ctname { flex: 1; min-width: 0; overflow: hidden; white-space: nowrap; }
.fullbtn { margin: 9px 7px 0 auto; color: #dcdad0; }

.viewpanel { height: 1310px; flex: none; padding: 0 3px 1px 2px; display: flex; flex-direction: column; }
.vtools { height: 45px; flex: none; display: flex; align-items: center; }
.tb { width: 21px; margin: 0 10.750px; color: #e0ded4; }
.tb-sel { margin: 0 7.500px; color: #ccf000; }
.tsep { width: 1px; height: 26px; background: #8d8774; margin: 0 5px; flex: none; }
.tsep.first { margin-left: 8px; }
.tmenu { margin-left: 11px; }
.tmenu + .tmenu { margin-left: 23px; }
.tsep.last { margin-left: 15px; margin-right: 9px; }
.tb.camdim { color: #9a6e60; }
.skelbtn {
  width: 117px; height: 34px; display: flex; align-items: center; padding-left: 7px; gap: 4px;
  background: #777353; border-bottom: 3px solid #ccf000;
}
.viewport { flex: 1; position: relative; background: #4c4c4c; border: 2px solid #c9c7bc; overflow: hidden; }
.scene { position: absolute; left: -2px; top: -2px; width: 1866px; height: 1263px; }
.scene path, .scene ellipse, .scene circle { vector-effect: non-scaling-stroke; fill: none; }
.grid path { stroke: #565656; stroke-width: 1; }
.grid .hz { stroke: #5b5b5b; }
.grid .bright { stroke: #6e6e6e; }
.purple { stroke: #80578a; stroke-width: 1.200; }
.axisg { stroke: #7fa80f; stroke-width: 1.500; }
.axisr { stroke: #a83654; stroke-width: 1.500; }
.axisb { stroke: #2f7fbf; stroke-width: 1.500; }
.sphere ellipse { stroke: #56708f; stroke-width: 1.200; }
.wire { stroke: #b4b4b4; stroke-width: .8; }
.sph2 { stroke: #56708f; stroke-width: 1.200; }
.or { stroke: #c98100; stroke-width: 1.700; }
.orth { stroke: #c98100; stroke-width: 4; }
.ghost { stroke: #b5b5b5; stroke-width: 2; }
.redthin { stroke: #c73058; stroke-width: 1; }
.greenthin { stroke: #88b800; stroke-width: 1; }
.greenthick { stroke: #88b800; stroke-width: 4.500; }
.redthick { stroke: #c73058; stroke-width: 4; }
.blthin { stroke: #2b88c8; stroke-width: 1.500; }
.blthick { stroke: #2b88c8; stroke-width: 5; stroke-linecap: round; stroke-linejoin: round; }
.grthick { stroke: #88b800; stroke-width: 5; stroke-linecap: round; }
.ticks { stroke: #7f7f7f; stroke-width: 3.500; stroke-linecap: round; }
.scene .hub { fill: #8f8f8f; opacity: .8; }
.scene .ftip-g { fill: #88b800; }
.scene .ftip-b { fill: #2b88c8; }
.scene .ftip-r { fill: #c73058; }
.scene .gz-rd { fill: #8e3349; }
.scene .gz-gd { fill: #5b8a0a; stroke: #5b8a0a; }
.scene .gz-bd { fill: #2060a6; stroke: #2f7fd0; stroke-width: 1.500; }
.scene .gz-r { fill: #a01f3f; stroke: #ee2b55; stroke-width: 2; }
.scene .gz-y { fill: #85c900; }
.scene .gz-z { fill: #2f7fd0; }
.gz-yl { stroke: #85c900; stroke-width: 2.500; }
.gz-zl { stroke: #2f7fd0; stroke-width: 2.500; }
.gz-t { font-size: 18px; text-anchor: middle; fill: #23252b; font-family: "Noto Sans", sans-serif; }
.persp {
  position: absolute; left: 11px; top: 10px; width: 139px; height: 35px;
  background: #5b574e; display: flex; align-items: center; gap: 5px; padding-left: 5px;
}
.fps {
  position: absolute; right: 0; top: 112px; width: 169px; height: 34px;
  background: #5e594d; color: #e6c86e; display: flex; align-items: center; padding-left: 6px; white-space: nowrap;
}
.stats {
  position: absolute; left: 1628px; top: 878px; width: 225px; height: 371px;
  background: rgba(122,115,96,.55); padding: 3px 0 0 6px; line-height: 28px; white-space: nowrap;
}
.output { flex: 1; margin-top: 13px; padding: 6px 6px 0; display: flex; flex-direction: column; min-height: 0; }
.ohead { height: 34px; flex: none; display: flex; align-items: center; gap: 5px; }
.olabel { margin-right: auto; padding-left: 5px; }
.small { width: 60px; }
.small:last-child { width: 63px; }
.obox { height: 239px; flex: none; margin-top: 6px; background: #38332c; border: 1px solid #14130f; }
.ofoot { flex: 1; display: flex; align-items: center; padding: 2px 0 0 8px; }
.otab { margin-right: 22px; }
.otab.on { color: #ccf000; }
.ver { margin-left: auto; color: #a19e8f; margin-right: 19px; }
.topic { margin-right: 9px; }

/* inspector */
.inpanel { flex: 1; min-height: 0; padding: 6px 0 0 5px; display: flex; flex-direction: column; }
.ibar { height: 34px; flex: none; display: flex; align-items: center; padding-left: 9px; }
.ibtn { margin-right: 21.500px; }
.greyic { color: #8f8b7c; }
.ibtn2 { width: 21px; margin-right: 10px; }
.pushright { margin-left: auto; }
.ibtn3 { margin-right: 6px; }
.ibar .ibtn2 + .ibtn2 { margin-right: 18px; }
.irow { height: 34px; flex: none; display: flex; align-items: center; margin-top: 6px; }
.res { width: 557.500px; }
.res .pink { margin-left: 0; }
.resname { margin-left: 15px; }
.chevsm { margin-left: auto; margin-right: 7px; width: 17px; height: 17px; color: #b8b5a8; }
.irowbtn { margin-left: 13px; }
.props { flex: none; margin-top: 6px; height: 1522px; background: #38332c; border-top: 1px solid #14130f; padding: 4px 20px 0 5px; position: relative; }
.chead { height: 29px; display: flex; align-items: center; justify-content: center; gap: 4px; background: #4f4b43; }
.chead .ic { width: 20px; height: 20px; }
.nodehead { margin-top: 1px; }
.sect { height: 29px; display: flex; align-items: center; gap: 6px; background: #3e3a31; padding-left: 3px; }
.sect .ar { width: 17px; height: 17px; }
.idx { height: 28px; margin-top: 1px; margin-left: 10px; display: flex; align-items: center; gap: 6px; background: #3b372f; padding-left: 4px; }
.idx.gap { margin-top: 7px; }
.prop { height: 34px; margin-top: 6px; display: flex; align-items: center; }
.prop.first { margin-top: 1px; }
.plabel { width: 297.500px; flex: none; padding-left: 23px; color: #aaa79a; }
.pval { width: 276px; height: 34px; flex: none; background: #14130f; display: flex; align-items: center; }
.input { background: #38332c; border: 1px solid #14130f; padding-left: 7px; }
.num { padding-left: 21px; position: relative; }
.spinic { margin-left: auto; margin-right: 8px; width: 20px; height: 20px; color: #c9c7bc; }
.check { padding-left: 7px; }
.box { width: 17px; height: 21px; background: #699ce8; border-radius: 2px; display: flex; align-items: center; }
.box svg { width: 17px; height: 17px; }
.ontxt { color: #ccf000; margin-left: 8px; }
.arr { justify-content: center; }
.plab { height: 35px; padding: 6px 0 0 23px; color: #aaa79a; line-height: 28px; }
.mat {
  margin-left: 21.500px; width: 552px; height: 154px; background: #14130f;
  display: grid; grid-template-columns: 25px 161px 25px 161px 25px 155px; grid-auto-rows: 34px; row-gap: 6px;
}
.mat i, .mat b { font-style: normal; font-weight: 400; display: flex; align-items: center; }
.mat i { background: #080806; justify-content: center; }
.mat b { padding-left: 5px; }
.mat .x { color: #7c4a33; }
.mat .y { color: #2a7a45; }
.mat .z { color: #402f86; }
.edlabel { height: 30px; line-height: 30px; color: #aaa79a; padding-left: 2px; }
.edbox { height: 117px; background: #38332c; border: 1px solid #14130f; display: flex; justify-content: flex-end; }
.edside { width: 38px; background: #14130f; display: flex; align-items: center; justify-content: center; padding-top: 32px; }
.inscroll { right: 4px; top: 9px; height: 1505px; }
.inscroll .thumb { top: 0; height: 1344px; }
```
